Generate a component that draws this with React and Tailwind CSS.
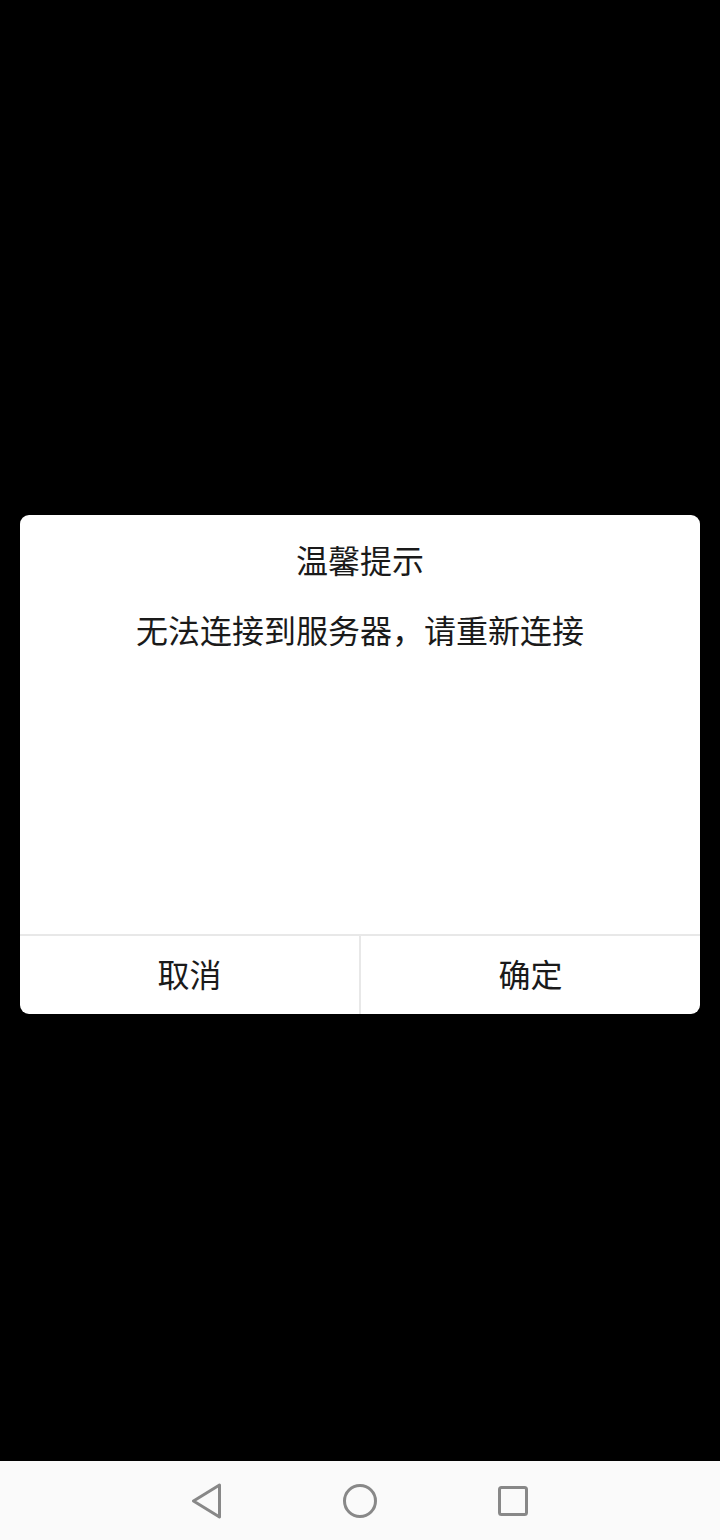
import React from 'react';

const cjk = { fontFamily: '"Noto Sans CJK SC", "Noto Sans", sans-serif' };

const NavBar = () => (
    <div className="h-[79px] bg-[#fafafa] flex items-center justify-center">
        <div className="w-[342px] flex items-center justify-between">
            {/* back */}
            <svg width="36" height="36" viewBox="0 0 36 36" fill="none">
                <path d="M30.5 2 L4.5 18 L30.5 34 Z" stroke="#888" strokeWidth="3" strokeLinejoin="round" />
            </svg>
            {/* home */}
            <svg width="36" height="36" viewBox="0 0 36 36" fill="none">
                <circle cx="18" cy="18" r="15.5" stroke="#888" strokeWidth="3" />
            </svg>
            {/* recents */}
            <svg width="36" height="36" viewBox="0 0 36 36" fill="none">
                <rect x="4.5" y="4.5" width="27" height="27" rx="2" stroke="#888" strokeWidth="3" />
            </svg>
        </div>
    </div>
);

export default function App() {
    return (
        <div className="w-[720px] h-[1540px] bg-black flex flex-col" style={cjk}>
            <div className="flex-1 flex flex-col">
                <div className="h-[515px]" />
                {/* Dialog */}
                <div className="mx-[20px] bg-white rounded-[9px] overflow-hidden">
                    <div className="h-[419px] flex flex-col items-center pt-[22px] text-[#1a1a1a]">
                        <div className="text-[32px] leading-[45px]">温馨提示</div>
                        <div className="mt-[25px] text-[32px] leading-[45px]">无法连接到服务器，请重新连接</div>
                    </div>
                    <div className="h-[80px] flex border-t-2 border-[#e8e8e8] text-[#1a1a1a] text-[32px]">
                        <button className="flex-1 flex items-center justify-center pb-[4px] border-r-2 border-[#e8e8e8]">取消</button>
                        <button className="flex-1 flex items-center justify-center pb-[4px]">确定</button>
                    </div>
                </div>
            </div>
            <NavBar />
        </div>
    );
}
